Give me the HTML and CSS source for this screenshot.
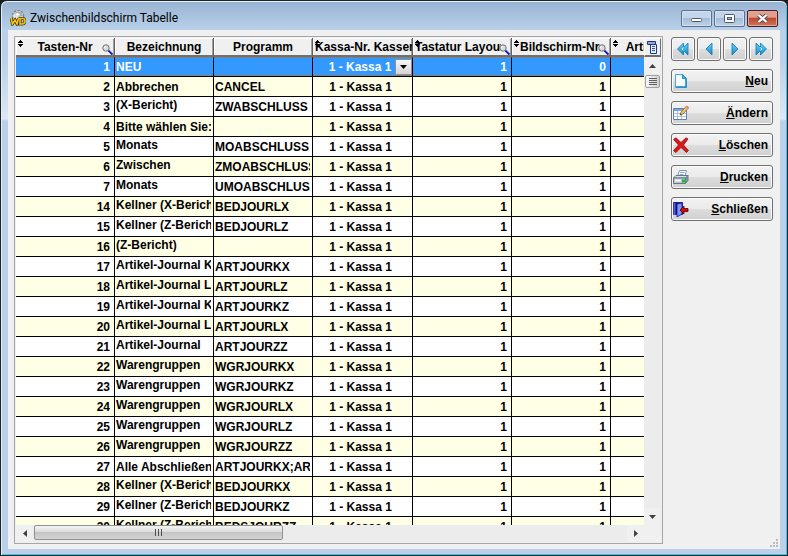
FILE: index.html
```html
<!DOCTYPE html>
<html lang="de">
<head>
    <meta charset="UTF-8">
    <meta name="viewport" content="width=device-width, initial-scale=1.0">
    <title>Zwischenbildschirm Tabelle</title>
    <link rel="stylesheet" href="styles.css">
</head>
<body>
    <!-- Icons, die mehrfach vorkommen -->
    <svg class="sprite" aria-hidden="true">
        <symbol id="sort" viewBox="0 0 5 7">
            <path d="M2 0h1v1h1v1h1v1H0V2h1V1h1zM0 4h5v1H4v1H3v1H2V6H1V5H0z" fill="#000"/>
        </symbol>
        <symbol id="lupe" viewBox="0 0 11 11">
            <path d="M6 6l4.500 4.500" stroke="#1010c0" stroke-width="2"/>
            <path d="M6.500 5.500l4 4" stroke="#6a8ae0" stroke-width="0.700"/>
            <circle cx="4" cy="4" r="3.200" fill="#dcdcdc" stroke="#707070"/>
            <path d="M2.300 4a1.800 1.800 0 0 1 1.700-1.700" stroke="#fff" fill="none"/>
        </symbol>
        <linearGradient id="blau" x1="0" y1="0" x2="0" y2="1">
            <stop offset="0" stop-color="#6cd4f4"/>
            <stop offset="1" stop-color="#1488c8"/>
        </linearGradient>
    </svg>

    <div class="window">
        <header class="titlebar">
            <svg class="app-icon" viewBox="0 0 16 16">
                <circle cx="8" cy="6" r="5.500" fill="#eef0f0" stroke="#7a8488" stroke-width="1.500" stroke-dasharray="2.500 1"/>
                <path d="M4 3l3-1.500 4 .5 2 3-2 2-5-1z" fill="#a9b2b5"/>
                <path d="M5 4l3-1 2 2-3 1z" fill="#fff"/>
                <path d="M1 8l1.500 6L5 10l2 4 1.500-6M10 8.500v5.500h2q3 0 3-3t-3-2.500z" fill="none" stroke="#4a3500" stroke-width="3"/>
                <path d="M1 8l1.500 6L5 10l2 4 1.500-6M10 8.500v5.500h2q3 0 3-3t-3-2.500z" fill="none" stroke="#f8c818" stroke-width="1.500"/>
            </svg>
            <h1>Zwischenbildschirm Tabelle</h1>
            <div class="window-buttons">
                <button type="button" aria-label="Minimieren">
                    <svg viewBox="0 0 13 11" width="13" height="11"><rect x="1.500" y="5.500" width="10" height="3" rx="1" fill="#fff" stroke="#505868"/></svg>
                </button>
                <button type="button" aria-label="Maximieren">
                    <svg viewBox="0 0 13 11" width="13" height="11"><rect x="1.500" y="1.500" width="10" height="8" rx="1" fill="#fff" stroke="#505868"/><rect x="4.500" y="4.500" width="4" height="2" fill="#a9bfd8" stroke="#505868"/></svg>
                </button>
                <button type="button" class="close" aria-label="Fenster schließen">
                    <svg viewBox="0 0 13 11" width="13" height="11"><path d="M2.500 2l8 7M10.500 2l-8 7" stroke="#54485a" stroke-width="4"/><path d="M2.500 2l8 7M10.500 2l-8 7" stroke="#fff" stroke-width="2.300"/></svg>
                </button>
            </div>
        </header>

        <main class="client">
            <section class="grid">
                <div class="table-area">
                    <table>
                        <colgroup>
                            <col class="col"><col class="col"><col class="col"><col class="col-wide"><col class="col"><col class="col"><col class="col">
                        </colgroup>
                        <thead>
                            <tr>
                                <th><svg class="sort"><use href="#sort"/></svg>Tasten-Nr<svg class="lupe"><use href="#lupe"/></svg></th>
                                <th>Bezeichnung</th>
                                <th>Programm</th>
                                <th class="long"><svg class="sort"><use href="#sort"/></svg><div class="text">Kassa-Nr. Kassen</div></th>
                                <th class="long with-lupe"><svg class="sort"><use href="#sort"/></svg><div class="text">Tastatur Layout</div><svg class="lupe"><use href="#lupe"/></svg></th>
                                <th><svg class="sort"><use href="#sort"/></svg>Bildschirm-Nr.<svg class="lupe"><use href="#lupe"/></svg></th>
                                <th><svg class="sort"><use href="#sort"/></svg>Artikelname</th>
                            </tr>
                        </thead>
                        <tbody id="rows">
                            <tr class="selected">
                                <td class="num">1</td>
                                <td>NEU</td>
                                <td></td>
                                <td class="combo">
                                    <select aria-label="Kassa-Nr. Kassen"><option>1 - Kassa 1</option></select>
                                    <span class="combo-arrow"><svg viewBox="0 0 7 4" width="7" height="4"><path d="M0 0h7L3.500 4z"/></svg></span>
                                </td>
                                <td class="num">1</td>
                                <td class="num">0</td>
                                <td></td>
                            </tr>
                        </tbody>
                    </table>
                </div>
                <div class="vscroll">
                    <button type="button" class="columns" aria-label="Spalten">
                        <svg viewBox="0 0 11 13" width="11" height="13">
                            <path d="M.5 3.500v-3h8v3z" fill="#fff" stroke="#183880"/>
                            <path d="M1 2h7" stroke="#2850b0"/>
                            <path d="M3.500 3.500h6v9h-6z" fill="#e8f0ff" stroke="#183880"/>
                            <path d="M5 5.500h3M5 7.500h3M5 9.500h3" stroke="#2850b0"/>
                        </svg>
                    </button>
                    <button type="button" aria-label="Nach oben"><svg viewBox="0 0 7 4" width="7" height="4"><path d="M0 4h7L3.500 0z"/></svg></button>
                    <div class="vtrack"><div class="vthumb"><i></i><i></i><i></i><i></i></div></div>
                    <button type="button" aria-label="Nach unten"><svg viewBox="0 0 7 4" width="7" height="4"><path d="M0 0h7L3.500 4z"/></svg></button>
                </div>
                <div class="hscroll">
                    <button type="button" aria-label="Nach links"><svg viewBox="0 0 4 7" width="4" height="7"><path d="M4 0v7L0 3.500z"/></svg></button>
                    <div class="htrack"><div class="hthumb"><i></i><i></i><i></i></div></div>
                    <button type="button" aria-label="Nach rechts"><svg viewBox="0 0 4 7" width="4" height="7"><path d="M0 0v7l4-3.500z"/></svg></button>
                </div>
            </section>

            <aside class="actions">
                <nav class="nav">
                    <button type="button" aria-label="Erster"><svg viewBox="0 0 14 14"><path d="M7.500 1v4.500l4.500-4.500v12L7.500 8.500V13l-6-6z" fill="url(#blau)" stroke="#0878b8" stroke-width=".8"/><path d="M7.500 5.500L6 7l1.500 1.500" fill="none" stroke="#e8f8ff"/></svg></button>
                    <button type="button" aria-label="Zurück"><svg viewBox="0 0 14 14"><path d="M10 1v12L4 7z" fill="url(#blau)" stroke="#0878b8" stroke-width=".8"/></svg></button>
                    <button type="button" aria-label="Weiter"><svg viewBox="0 0 14 14"><path d="M4 1v12l6-6z" fill="url(#blau)" stroke="#0878b8" stroke-width=".8"/></svg></button>
                    <button type="button" aria-label="Letzter"><svg viewBox="0 0 14 14"><path d="M6.500 1v4.500L2 1v12l4.500-4.500V13l6-6z" fill="url(#blau)" stroke="#0878b8" stroke-width=".8"/><path d="M6.500 5.500L8 7 6.500 8.500" fill="none" stroke="#e8f8ff"/></svg></button>
                </nav>
                <button type="button" class="action">
                    <svg viewBox="0 0 16 16">
                        <path d="M2.500 1.500h7l4 4v9h-11z" fill="#f4fbff" stroke="#48a8d8"/>
                        <path d="M3 14h10V6" fill="none" stroke="#1888c8" stroke-width="1.500"/>
                        <path d="M9.500 1.500v4h4z" fill="#48b0e0" stroke="#2890c8"/>
                    </svg>
                    <span><u>N</u>eu</span>
                </button>
                <button type="button" class="action">
                    <svg viewBox="0 0 16 16">
                        <path d="M.5 3.500h13v11H.5z" fill="#fff" stroke="#6080b8"/>
                        <path d="M1 4h12v2H1z" fill="#7fa4dc"/>
                        <path d="M1 8.500h12M1 11.500h12M4.500 6v8M8.500 6v8" stroke="#a8c0e4"/>
                        <path d="M7 10l1-3 5.500-6 2 2L10 9z" fill="#f0c060" stroke="#906838" stroke-width=".8"/>
                        <path d="M13 1.500L14 .5l2 2-1 1z" fill="#e08070"/>
                        <path d="M7 10l.5-1.500 1 1z" fill="#302010"/>
                    </svg>
                    <span><u>Ä</u>ndern</span>
                </button>
                <button type="button" class="action">
                    <svg viewBox="0 0 16 16"><path d="M.5 2.500L3 .8 8 5.500 13 .8l2 1.200-4.500 6 5 5.500-2 2L8 10.500 3 15.500l-2.500-1.800L5.500 8z" fill="#d81818" stroke="#981010" stroke-width=".8"/></svg>
                    <span><u>L</u>öschen</span>
                </button>
                <button type="button" class="action">
                    <svg viewBox="0 0 16 16">
                        <path d="M4.500 7l2-5.500h7L12 7z" fill="#fff" stroke="#8098b0"/>
                        <path d="M7 3.500h4.500M6.500 5.500h4" stroke="#80b0e0"/>
                        <path d="M.5 9L3 6.500h12L13.500 9z" fill="#d8e0e8" stroke="#687888"/>
                        <path d="M.5 9h12v5.500H.5z" fill="#b8c4d0" stroke="#687888"/>
                        <path d="M12.500 9L15 6.500v5l-2.500 3z" fill="#8898a8" stroke="#687888"/>
                        <path d="M2 11.500h6" stroke="#f8f8f8" stroke-width="2"/>
                        <path d="M9 10.500h4v3H9z" fill="#18c030"/>
                    </svg>
                    <span><u>D</u>rucken</span>
                </button>
                <button type="button" class="action">
                    <svg viewBox="0 0 16 16">
                        <path d="M.5 1.500h9v12h-9z" fill="#101050" stroke="#2020a0"/>
                        <path d="M1.500 2v12" stroke="#5858f0" stroke-width="2"/>
                        <path d="M4 3l5-1v11l-5 3z" fill="#7898f8" stroke="#1818a0" stroke-width=".8"/>
                        <path d="M7 9l4-4v2.500h4v3h-4V13z" fill="#d80808" stroke="#500000" stroke-width=".8"/>
                    </svg>
                    <span><u>S</u>chließen</span>
                </button>
                <svg class="grip" viewBox="0 0 8 8"><path d="M6 0h2v2H6zM3 3h2v2H3zM6 3h2v2H6zM0 6h2v2H0zM3 6h2v2H3zM6 6h2v2H6z" fill="#bcbcbc"/></svg>
            </aside>
        </main>
    </div>

    <script src="table.js"></script>
</body>
</html>
```
FILE: styles.css
```css
* {
    box-sizing: border-box;
}

body {
    margin: 0;
    height: 100vh;
    background-color: #1c1c20;
    font-family: "Liberation Sans", Arial, sans-serif;
    font-size: 12px;
    font-weight: bold;
    color: #000;
}

button {
    padding: 0;
    border: none;
    font: inherit;
    color: inherit;
    display: flex;
    align-items: center;
    justify-content: center;
}

.sprite {
    position: absolute;
    width: 0;
    height: 0;
}

.window {
    height: 100%;
    display: flex;
    flex-direction: column;
    padding: 0 6px 6px;
    border: 1px solid #202428;
    border-radius: 7px 7px 0 0;
    background: linear-gradient(#98b3d2, #b9d1ea 30px, #b9d1ea 60px, #dce8f4 118px, #b9d1ea 120px);
    box-shadow: inset 0 1px #e8f2fa, inset 1px 0 #e0f0fa, inset -1px -1px #30c8e8;
}

/* Titelleiste */
.titlebar {
    flex: none;
    height: 29px;
    display: flex;
    align-items: center;
    padding: 5px 3px 0 3px;
}

.app-icon {
    width: 16px;
    height: 16px;
    margin-right: 4px;
}

h1 {
    flex: 1;
    margin: 0;
    font-family: Roboto, "Noto Sans", sans-serif;
    font-size: 12px;
    font-weight: normal;
}

.window-buttons {
    display: flex;
    gap: 2px;
}

.window-buttons button {
    width: 31px;
    height: 17px;
    border: 1px solid #5c708c;
    border-radius: 2px;
    background: linear-gradient(#c2d5ea 45%, #a4bcd8 50%, #bcd2e8);
    box-shadow: inset 0 0 0 1px #d4e2f0;
}

.window-buttons .close {
    border-color: #501820;
    background: linear-gradient(#e0a090 40%, #c04830 50%, #d07858);
    box-shadow: inset 0 0 0 1px #e0a898;
}

/* Arbeitsbereich */
.client {
    flex: 1;
    min-height: 0;
    display: flex;
    gap: 8px;
    margin: 0 1px;
    padding: 6px 7px 5px 6px;
    background-color: #f0f0f0;
}

.grid {
    flex: 1;
    min-width: 0;
    display: grid;
    grid-template-columns: 1fr 17px;
    grid-template-rows: 1fr 17px;
    padding: 1px;
    border: 1px solid #a5a5ac;
    background-color: #f0f0f0;
}

.table-area {
    overflow: hidden;
    background-color: #fff;
}

/* Tabelle */
table {
    width: 694px;
    table-layout: fixed;
    border-collapse: separate;
    border-spacing: 0;
}

.col {
    width: 99px;
}

.col-wide {
    width: 100px;
}

th {
    position: relative;
    height: 19px;
    padding: 2px 0 0;
    border-right: 1px solid #606060;
    border-bottom: 2px solid #707070;
    background-color: #f0f0f0;
    box-shadow: inset 1px 1px #fff, inset -1px 0 #a0a0a0;
    overflow: hidden;
    white-space: nowrap;
    line-height: 15px;
}

.long {
    padding-left: 2px;
    text-align: left;
}

.with-lupe {
    padding-right: 10px;
}

.text {
    overflow: hidden;
}

.sort {
    position: absolute;
    left: 2px;
    top: 2px;
    width: 5px;
    height: 7px;
}

.lupe {
    position: absolute;
    right: 1px;
    top: 6px;
    width: 11px;
    height: 11px;
}

td {
    height: 20px;
    padding: 1px 2px 0 1px;
    border-right: 1px solid #000;
    border-bottom: 1px solid #000;
    line-height: 18px;
    white-space: nowrap;
}

tbody tr:nth-child(even) {
    background-color: #ffffe6;
}

.num {
    padding-right: 4px;
    text-align: right;
}

.kassa {
    padding-right: 5px;
    text-align: center;
}

/* mehrzeiliger Text, nur die erste Zeile ist zu sehen */
.multi {
    padding-top: 0;
    line-height: 16px;
    vertical-align: top;
}

.selected {
    background-color: #3399ff;
    color: #fff;
}

.selected td {
    border-top: 1px dotted #cc6600;
    padding-top: 0;
    line-height: 17px;
    background: linear-gradient(90deg, #cc6600 50%, transparent 50%) 0 100% / 2px 1px repeat-x;
}

.selected .combo {
    position: relative;
    padding: 0;
}

.combo select {
    display: block;
    width: 100%;
    height: 17px;
    padding: 0 5px 0 0;
    border: none;
    appearance: none;
    background: none;
    font: inherit;
    color: inherit;
    text-align: center;
    text-align-last: center;
}

.combo-arrow {
    position: absolute;
    right: 0;
    top: 1px;
    width: 17px;
    height: 16px;
    display: flex;
    align-items: center;
    justify-content: center;
    border: 1px solid #909090;
    background: linear-gradient(#f8f8f8, #d4d4d4);
    pointer-events: none;
}

/* Bildlaufleisten */
.vscroll {
    display: flex;
    flex-direction: column;
    background-color: #ececec;
}

.vscroll button {
    flex: none;
    height: 17px;
    background-color: #f0f0f0;
    fill: #404040;
}

.vscroll .columns {
    height: 19px;
    border: 1px solid #fff;
    border-right-color: #707070;
    border-bottom: 2px solid #707070;
}

.vtrack {
    flex: 1;
    padding: 1px;
}

.vthumb {
    height: 13px;
    display: flex;
    flex-direction: column;
    align-items: center;
    justify-content: center;
    gap: 1px;
    border: 1px solid #a0a0a0;
    border-radius: 2px;
    background: linear-gradient(90deg, #f8f8f8, #d0d0d0);
}

.vthumb i {
    width: 8px;
    height: 1px;
    background-color: #606060;
}

.hscroll {
    display: flex;
    background-color: #ececec;
}

.hscroll button {
    width: 17px;
    background-color: #f0f0f0;
    fill: #404040;
}

.htrack {
    flex: 1;
    padding: 0 1px 1px;
}

.hthumb {
    width: 42%;
    height: 15px;
    display: flex;
    align-items: center;
    justify-content: center;
    gap: 2px;
    border: 1px solid #909090;
    border-radius: 2px;
    background: linear-gradient(#f4f4f4, #dcdcdc 45%, #c4c4c4 50%, #d4d4d4);
}

.hthumb i {
    width: 1px;
    height: 7px;
    background-color: #505050;
}

/* Schaltflächen rechts */
.actions {
    flex: none;
    width: 102px;
    display: flex;
    flex-direction: column;
    gap: 8px;
    padding-top: 1px;
}

.nav {
    display: flex;
    gap: 2px;
}

.nav button,
.action {
    height: 24px;
    border: 1px solid #707070;
    border-radius: 3px;
    background: linear-gradient(#f2f2f2, #ebebeb 48%, #dddddd 52%, #cfcfcf);
    box-shadow: inset 0 0 0 1px #fafafa;
}

.nav button {
    flex: 1;
}

.nav svg {
    width: 14px;
    height: 14px;
}

.action {
    justify-content: space-between;
    padding: 0 4px 0 1px;
}

.action svg {
    width: 16px;
    height: 16px;
}

.grip {
    width: 8px;
    height: 8px;
    margin: auto -5px -3px auto;
}
```
FILE: table.js
```js
// Nr, Bezeichnung, Programm, mehrzeilige Bezeichnung
const rows = [
    [2, "Abbrechen", "CANCEL", false],
    [3, "(X-Bericht)", "ZWABSCHLUSS", true],
    [4, "Bitte wählen Sie:", "", false],
    [5, "Monats", "MOABSCHLUSS", true],
    [6, "Zwischen", "ZMOABSCHLUSS", true],
    [7, "Monats", "UMOABSCHLUSS", true],
    [14, "Kellner (X-Bericht)", "BEDJOURLX", true],
    [15, "Kellner (Z-Bericht)", "BEDJOURLZ", true],
    [16, "(Z-Bericht)", "", true],
    [17, "Artikel-Journal KX", "ARTJOURKX", true],
    [18, "Artikel-Journal LZ", "ARTJOURLZ", true],
    [19, "Artikel-Journal KZ", "ARTJOURKZ", true],
    [20, "Artikel-Journal LX", "ARTJOURLX", true],
    [21, "Artikel-Journal", "ARTJOURZZ", true],
    [22, "Warengruppen", "WGRJOURKX", true],
    [23, "Warengruppen", "WGRJOURKZ", true],
    [24, "Warengruppen", "WGRJOURLX", true],
    [25, "Warengruppen", "WGRJOURLZ", true],
    [26, "Warengruppen", "WGRJOURZZ", true],
    [27, "Alle Abschließen", "ARTJOURKX;ARTJOURKZ", false],
    [28, "Kellner (X-Bericht)", "BEDJOURKX", true],
    [29, "Kellner (Z-Bericht)", "BEDJOURKZ", true],
    [30, "Kellner (Z-Bericht)", "BEDSJOURZZ", true]
];

const tbody = document.getElementById("rows");

rows.forEach(function(row) {
    const tr = document.createElement("tr");
    const cells = [
        [row[0], "num"],
        [row[1], row[3] ? "multi" : ""],
        [row[2], ""],
        ["1 - Kassa 1", "kassa"],
        [1, "num"],
        [1, "num"],
        ["", ""]
    ];
    cells.forEach(function(cell) {
        const td = document.createElement("td");
        const text = document.createElement("div");
        text.textContent = cell[0];
        text.className = "text";
        td.className = cell[1];
        td.appendChild(text);
        tr.appendChild(td);
    });
    tbody.appendChild(tr);
});
```
